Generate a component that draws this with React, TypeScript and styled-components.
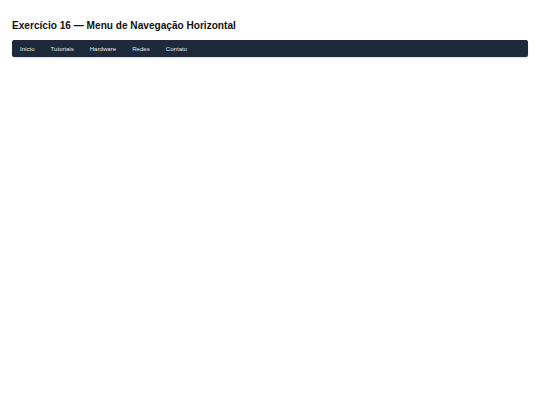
import React from 'react'
import styled, { createGlobalStyle } from 'styled-components'

const GlobalStyle = createGlobalStyle`
  body {
    margin: 0;
    background: #ffffff;
    font-family: 'Liberation Sans', Arial, sans-serif;
    color: #111111;
  }
`

const Page = styled.div`
  padding: 12px;
`

const Title = styled.h1`
  margin: 7px 0 7px;
  font-size: 10.1px;
  line-height: 14px;
  font-weight: 700;
  color: #111;
`

const NavBar = styled.nav`
  display: flex;
  background: #1e293b;
  border-radius: 2px;
  box-shadow: 0 1px 2px rgba(0, 0, 0, 0.15);
`

const NavLink = styled.a`
  display: block;
  padding: 5.5px 8px;
  font-size: 6.1px;
  line-height: 6px;
  color: #e5e7eb;
  text-decoration: none;
`

const links = ['Início', 'Tutoriais', 'Hardware', 'Redes', 'Contato']

export default function App(): JSX.Element {
  return (
    <Page>
      <GlobalStyle />
      <Title>Exercício 16 — Menu de Navegação Horizontal</Title>
      <NavBar>
        {links.map((l) => (
          <NavLink key={l} href='#'>
            {l}
          </NavLink>
        ))}
      </NavBar>
    </Page>
  )
}
